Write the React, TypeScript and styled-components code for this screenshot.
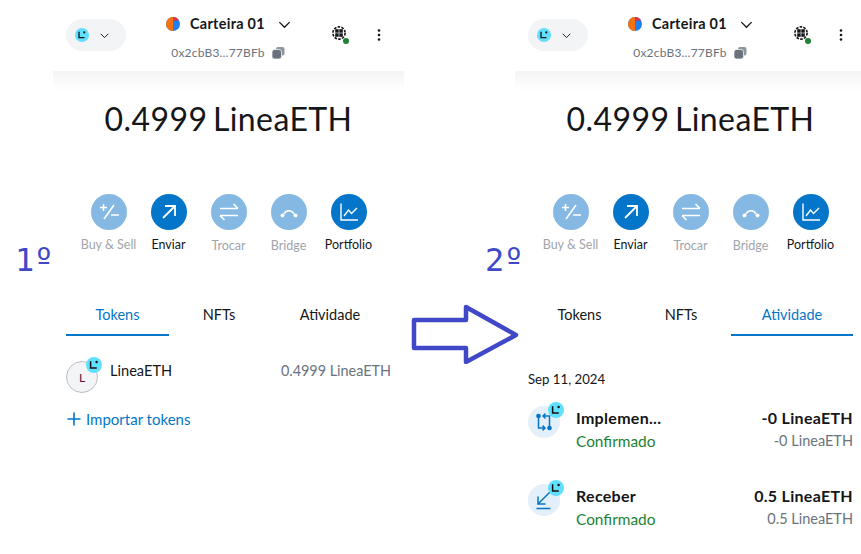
import React from "react"
import styled, {createGlobalStyle} from "styled-components"

const GlobalStyle = createGlobalStyle`
  html, body {
    margin: 0;
    padding: 0;
    background: #fff;
    overflow: hidden;
  }
  body {
    width: 861px;
    height: 554px;
    font-family: "Lato", "Liberation Sans", sans-serif;
    color: #141618;
  }
`

type TabName = "tokens" | "nfts" | "activity"

const Chevron = ({size}: {size: number}) => (
    <svg width={size} height={size} viewBox="0 0 16 16" fill="none" stroke="#141618" strokeWidth="1.4">
        <path d="M2.5 5.5 8 11l5.5-5.5"/>
    </svg>
)

const LineaMark = ({size}: {size: number}) => (
    <svg width={size} height={size} viewBox="0 0 16 16">
        <circle cx="8" cy="8" r="8" fill="#61dfff"/>
        <path d="M4.6 4.2v6.8h6.2" fill="none" stroke="#121212" strokeWidth="1.5"/>
        <circle cx="10.6" cy="5" r="1.2" fill="#121212"/>
    </svg>
)

const ActionIcon = ({name}: {name: string}) => {
    const common = {fill: "none", stroke: "#fff", strokeWidth: 1.6}
    return (
        <svg width="24" height="24" viewBox="0 0 24 24">
            {name === "buy" && <g {...common}>
                <path d="M3 7.5h7M6.5 4v7M7 19 17 5M14 15h8"/>
            </g>}
            {name === "send" && <g {...common} strokeWidth={1.8}>
                <path d="M6 18 18 6M8 6h10v10"/>
            </g>}
            {name === "swap" && <g {...common}>
                <path d="M3 8.5h18M16.5 4l4.5 4.5M21 15.5H3M7.5 20 3 15.5"/>
            </g>}
            {name === "bridge" && <g>
                <path d="M7 14a5.5 5.5 0 0 1 10 0" {...common} strokeWidth={1.5}/>
                <circle cx="5.5" cy="15.5" r="2" fill="#fff"/>
                <circle cx="18.5" cy="15.5" r="2" fill="#fff"/>
            </g>}
            {name === "portfolio" && <g {...common} strokeWidth={1.4}>
                <path d="M4 3.5V20h17M7 16l4.5-6 3 3.5L20 8"/>
            </g>}
        </svg>
    )
}

const actions = [
    {key: "buy", label: "Buy & Sell", off: true, low: false},
    {key: "send", label: "Enviar", off: false, low: false},
    {key: "swap", label: "Trocar", off: true, low: true},
    {key: "bridge", label: "Bridge", off: true, low: true},
    {key: "portfolio", label: "Portfolio", off: false, low: false},
]

const Wallet = ({tab}: {tab: TabName}) => (
    <Panel>
        <Header>
            <NetworkPill>
                <LineaMark size={14}/>
                <Chevron size={11}/>
            </NetworkPill>
            <Account>
                <AccountName>
                    <svg width="14" height="14" viewBox="0 0 14 14">
                        <circle cx="7" cy="7" r="7" fill="#1f7ff0"/>
                        <path d="M7 0a7 7 0 0 0 0 14z" fill="#f5720f"/>
                        <path d="M7 0a7 7 0 0 1 6 3.4L7 4z" fill="#d8344a"/>
                    </svg>
                    <strong>Carteira 01</strong>
                    <Chevron size={15}/>
                </AccountName>
                <Address>
                    0x2cbB3...77BFb
                    <svg width="14" height="14" viewBox="0 0 14 14" fill="#6a737d">
                        <rect x="5" y="1" width="8.5" height="8.5" rx="2" opacity="0.75"/>
                        <rect x="1" y="3.5" width="9.5" height="9.5" rx="2.5" stroke="#fff" strokeWidth="0.7"/>
                    </svg>
                </Address>
            </Account>
            <HeaderTools>
                <Globe>
                    <svg width="14" height="14" viewBox="0 0 14 14" fill="#141618">
                        <circle cx="7" cy="7" r="6.1" fill="none" stroke="#141618" strokeWidth="1.6" strokeDasharray="2.6 1.2"/>
                        <rect x="3.2" y="3.2" width="3.5" height="3.5"/>
                        <rect x="7.3" y="3.2" width="3.5" height="3.5"/>
                        <rect x="3.2" y="7.3" width="3.5" height="3.5"/>
                        <rect x="7.3" y="7.3" width="3.5" height="3.5"/>
                    </svg>
                    <StatusDot/>
                </Globe>
                <svg width="4" height="14" viewBox="0 0 4 14" fill="#141618">
                    <circle cx="2" cy="2.5" r="1.3"/>
                    <circle cx="2" cy="7" r="1.3"/>
                    <circle cx="2" cy="11.5" r="1.3"/>
                </svg>
            </HeaderTools>
        </Header>
        <Balance>0.4999 LineaETH</Balance>
        <Actions>
            {actions.map(a => (
                <Action key={a.key}>
                    <ActionCircle $off={a.off}><ActionIcon name={a.key}/></ActionCircle>
                    <ActionLabel $off={a.off} $low={a.low}>{a.label}</ActionLabel>
                </Action>
            ))}
        </Actions>
        <Tabs>
            <Tab $active={tab === "tokens"}>Tokens</Tab>
            <Tab $active={tab === "nfts"}>NFTs</Tab>
            <Tab $active={tab === "activity"}>Atividade</Tab>
        </Tabs>
        {tab === "tokens" && <TokenList/>}
        {tab === "activity" && <ActivityList/>}
    </Panel>
)

const TokenList = () => (
    <>
        <TokenRow>
            <AvatarWrap>
                <TokenAvatar>L</TokenAvatar>
                <Badge><LineaMark size={16}/></Badge>
            </AvatarWrap>
            <TokenName>LineaETH</TokenName>
            <TokenAmount>0.4999 LineaETH</TokenAmount>
        </TokenRow>
        <ImportLink>
            <svg width="14" height="14" viewBox="0 0 14 14" stroke="#0376c9" strokeWidth="1.6">
                <path d="M7 0.5v13M0.5 7h13"/>
            </svg>
            Importar tokens
        </ImportLink>
    </>
)

const ActivityList = () => (
    <>
        <DateLine>Sep 11, 2024</DateLine>
        <ActivityRow>
            <AvatarWrap>
                <ActivityIcon>
                    <svg width="18" height="20" viewBox="0 0 18 20" fill="none" stroke="#0376c9" strokeWidth="1.5">
                        <circle cx="3.5" cy="4" r="1.6" fill="#0376c9"/>
                        <circle cx="14.5" cy="16" r="1.6" fill="#0376c9"/>
                        <path d="M3.5 4v12h6M7.5 13.5 10 16l-2.5 2.5M14.5 16V4h-6M10.5 1.5 8 4l2.5 2.5"/>
                    </svg>
                </ActivityIcon>
                <Badge><LineaMark size={16}/></Badge>
            </AvatarWrap>
            <ActivityText>
                <strong>Implemen...</strong>
                <Status>Confirmado</Status>
            </ActivityText>
            <ActivityAmounts>
                <strong>-0 LineaETH</strong>
                <span>-0 LineaETH</span>
            </ActivityAmounts>
        </ActivityRow>
        <ActivityRow>
            <AvatarWrap>
                <ActivityIcon>
                    <svg width="18" height="20" viewBox="0 0 18 20" fill="none" stroke="#0376c9" strokeWidth="1.5">
                        <path d="M15 2 3 14M3 6.5V14h7.5M1.5 18.5h14"/>
                    </svg>
                </ActivityIcon>
                <Badge><LineaMark size={16}/></Badge>
            </AvatarWrap>
            <ActivityText>
                <strong>Receber</strong>
                <Status>Confirmado</Status>
            </ActivityText>
            <ActivityAmounts>
                <strong>0.5 LineaETH</strong>
                <span>0.5 LineaETH</span>
            </ActivityAmounts>
        </ActivityRow>
    </>
)

export default function App() {
    return (
        <>
            <GlobalStyle/>
            <Page>
                <Wallet tab="tokens"/>
                <Wallet tab="activity"/>
                <StepMark $left={15}>1º</StepMark>
                <StepMark $left={485}>2º</StepMark>
                <FlowArrow width="110" height="60" viewBox="0 0 110 60" fill="none" stroke="#4048c8" strokeWidth="4.5" strokeLinejoin="round">
                    <path d="M3 16h52V3l50 28-50 27V44H3z"/>
                </FlowArrow>
            </Page>
        </>
    )
}

const Page = styled.div`
  position: relative;
  display: flex;
  align-items: flex-start;
  gap: 111px;
  width: 861px;
  height: 554px;
  padding-left: 53px;
  box-sizing: border-box;
  overflow: hidden;
`

const Panel = styled.div`
  flex: 0 0 351px;
  display: flex;
  flex-direction: column;
`

const Header = styled.header`
  position: relative;
  height: 71px;
  display: flex;
  align-items: center;
  padding: 0 13px 1px;
  box-sizing: border-box;

  &::after {
    content: "";
    position: absolute;
    left: 0;
    right: 0;
    top: 100%;
    height: 20px;
    background: linear-gradient(#f5f5f6, #fff);
  }
`

const NetworkPill = styled.div`
  width: 60px;
  height: 32px;
  border-radius: 16px;
  background: #f2f4f6;
  display: flex;
  align-items: center;
  gap: 10px;
  padding-left: 9px;
  box-sizing: border-box;
`

const Account = styled.div`
  margin-left: 40px;
  padding-top: 4px;
  display: flex;
  flex-direction: column;
  align-items: center;
  gap: 12px;
  width: 124px;
`

const AccountName = styled.div`
  display: flex;
  align-items: center;
  gap: 10px;
  font-size: 14.4px;
  line-height: 20px;
  align-self: flex-start;
  white-space: nowrap;

  strong {
    font-weight: 700;
    letter-spacing: 0.3px;
  }

  svg:last-child {
    margin-left: 2px;
  }
`

const Address = styled.div`
  display: flex;
  align-items: center;
  gap: 6px;
  font-size: 12px;
  line-height: 14px;
  color: #6a737d;
  letter-spacing: 0.2px;
  white-space: nowrap;
`

const HeaderTools = styled.div`
  margin-left: auto;
  display: flex;
  align-items: center;
  gap: 31px;
  padding-right: 10px;
`

const Globe = styled.div`
  position: relative;
  width: 14px;
  height: 14px;
  margin-top: -4px;

  svg {
    display: block;
  }
`

const StatusDot = styled.span`
  position: absolute;
  right: -3px;
  bottom: -4px;
  width: 6px;
  height: 6px;
  border-radius: 50%;
  background: #1c8234;
`

const Balance = styled.div`
  margin-top: 27px;
  text-align: center;
  font-size: 32px;
  line-height: 42px;
  letter-spacing: 0.4px;
  word-spacing: -3px;
`

const Actions = styled.div`
  margin-top: 54px;
  padding: 0 21px;
  display: grid;
  grid-template-columns: repeat(5, 60px);
  justify-content: center;
`

const Action = styled.div`
  display: flex;
  flex-direction: column;
  align-items: center;
  gap: 7px;
`

const ActionCircle = styled.div<{$off: boolean}>`
  width: 36px;
  height: 36px;
  border-radius: 50%;
  display: flex;
  align-items: center;
  justify-content: center;
  background: ${p => (p.$off ? "#85b9e4" : "#0376c9")};
`

const ActionLabel = styled.span<{$off: boolean; $low: boolean}>`
  font-size: 12.5px;
  line-height: 16px;
  white-space: nowrap;
  padding-top: ${p => (p.$low ? "1px" : "0")};
  color: ${p => (p.$off ? "#a0a5ab" : "#141618")};
`

const Tabs = styled.div`
  margin: 47px 13px 0;
  display: grid;
  grid-template-columns: 103px 100px 122px;
`

const Tab = styled.div<{$active: boolean}>`
  height: 35px;
  line-height: 28px;
  text-align: center;
  font-size: 14.5px;
  box-sizing: border-box;
  color: ${p => (p.$active ? "#0376c9" : "#141618")};
  border-bottom: 2px solid ${p => (p.$active ? "#0376c9" : "transparent")};
`

const TokenRow = styled.div`
  margin: 25px 13px 0;
  display: flex;
  align-items: flex-start;
`

const AvatarWrap = styled.div`
  position: relative;
  flex: 0 0 32px;
  height: 32px;
`

const TokenAvatar = styled.div`
  width: 32px;
  height: 32px;
  border-radius: 50%;
  background: #f2f4f6;
  border: 1px solid #bbc0c5;
  box-sizing: border-box;
  display: flex;
  align-items: center;
  justify-content: center;
  font-size: 12px;
  color: #5a1038;
`

const Badge = styled.div`
  position: absolute;
  top: -4px;
  right: -4px;
  height: 16px;
`

const TokenName = styled.div`
  margin-left: 12px;
  font-size: 14.6px;
  line-height: 20px;
`

const TokenAmount = styled.div`
  margin-left: auto;
  font-size: 14.4px;
  line-height: 20px;
  color: #6a737d;
`

const ImportLink = styled.div`
  margin: 16px 13px 0 14px;
  display: flex;
  align-items: center;
  gap: 5px;
  font-size: 15px;
  line-height: 20px;
  color: #0376c9;
`

const DateLine = styled.div`
  margin: 35px 13px 0;
  font-size: 13.2px;
  line-height: 16px;
`

const ActivityRow = styled.div`
  margin: 19px 13px 33px;
  display: flex;
  align-items: flex-start;

  & + & {
    margin-top: 0;
  }
`

const ActivityIcon = styled.div`
  width: 32px;
  height: 32px;
  border-radius: 50%;
  background: #e3eff9;
  display: flex;
  align-items: center;
  justify-content: center;
`

const ActivityText = styled.div`
  margin-left: 16px;
  margin-top: 2px;
  display: flex;
  flex-direction: column;
  gap: 3px;
  font-size: 15.4px;
  line-height: 20px;

  strong {
    font-size: 16px;
    font-weight: 700;
    letter-spacing: 0.3px;
  }
`

const Status = styled.span`
  color: #1c8234;
`

const ActivityAmounts = styled.div`
  margin-left: auto;
  margin-top: 2px;
  display: flex;
  flex-direction: column;
  align-items: flex-end;
  gap: 3px;
  font-size: 14.5px;
  line-height: 20px;

  strong {
    font-size: 16px;
    font-weight: 700;
    letter-spacing: 0.3px;
  }

  span {
    color: #6a737d;
  }
`

const StepMark = styled.div<{$left: number}>`
  position: absolute;
  top: 240px;
  left: ${p => p.$left}px;
  font-family: "DejaVu Sans Mono", monospace;
  font-size: 32px;
  line-height: 40px;
  letter-spacing: 0;
  color: #4048c8;
`

const FlowArrow = styled.svg`
  position: absolute;
  left: 411px;
  top: 304px;
`
